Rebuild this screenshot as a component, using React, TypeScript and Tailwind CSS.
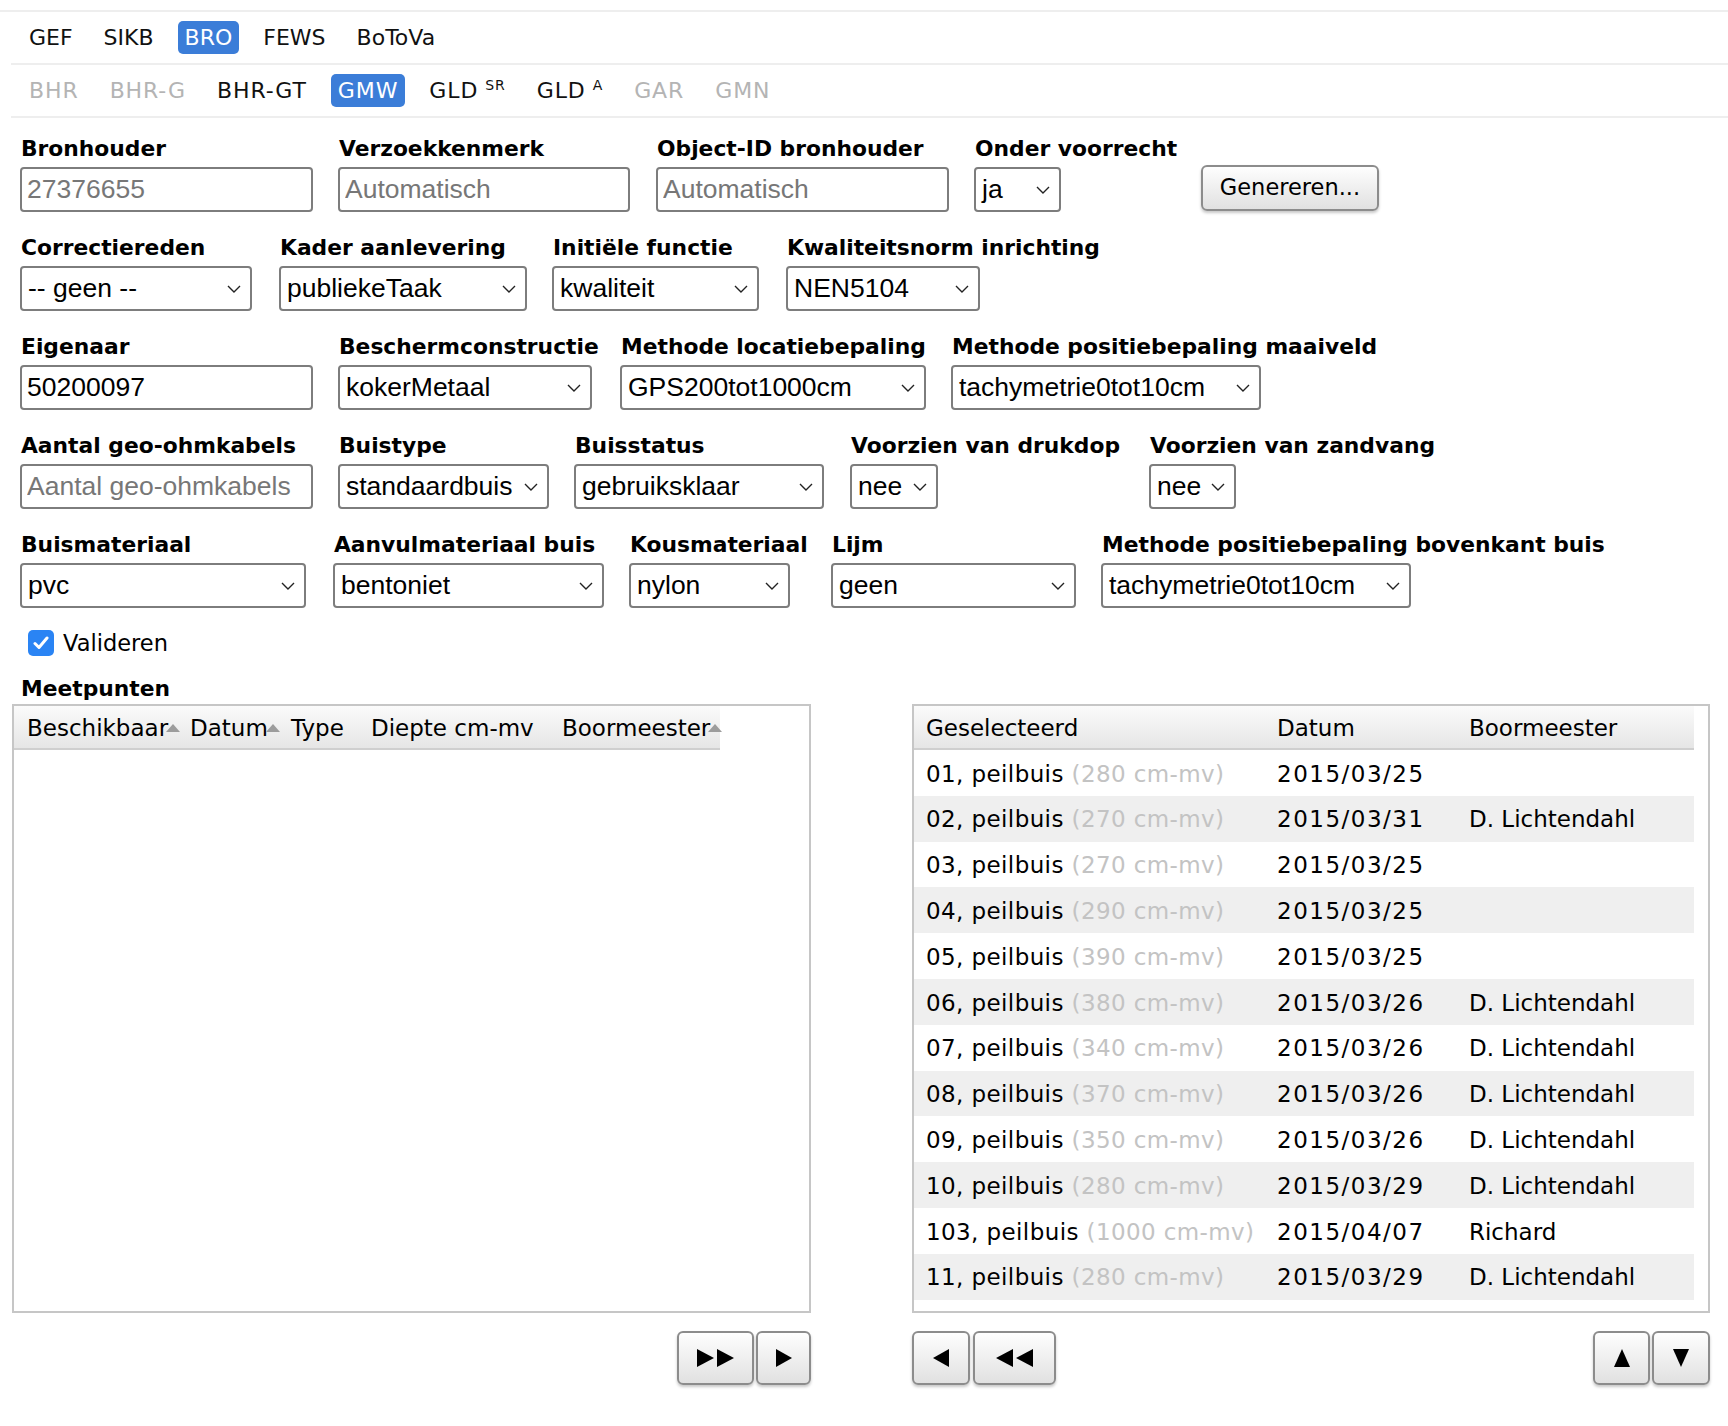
import React from "react";

const sans = "font-['DejaVu_Sans',sans-serif]";
const arial = "font-['Liberation_Sans',Arial,sans-serif]";

function Chevron() {
  return (
    <svg width="14" height="8" viewBox="0 0 14 8" className="shrink-0">
      <polyline points="1,1 7,7 13,1" fill="none" stroke="#222" strokeWidth="1.4" />
    </svg>
  );
}

function Field({ w, label, children }: { w: string; label: string; children: React.ReactNode }) {
  return (
    <div className={`${w} shrink-0 flex flex-col`}>
      <div className={`h-[30px] leading-[32px] pl-[1px] font-bold text-[21.8px] text-black whitespace-nowrap ${sans}`}>
        {label}
      </div>
      <div className="mt-[4px]">{children}</div>
    </div>
  );
}

function TextInput({ w, value, placeholder }: { w: string; value?: string; placeholder?: string }) {
  return (
    <input
      readOnly
      defaultValue={value}
      placeholder={placeholder}
      className={`${w} h-[45px] block border-2 border-[#7d7d7d] rounded-[4px] bg-white pl-[5px] outline-none ${arial} text-[26.5px] text-black placeholder:text-[#777777]`}
    />
  );
}

function Select({ w, value }: { w: string; value: string }) {
  return (
    <div
      className={`${w} h-[45px] border-2 border-[#7d7d7d] rounded-[4px] bg-white pl-[6px] pr-[9px] flex items-center justify-between ${arial} text-[26.5px] text-black whitespace-nowrap`}
    >
      <span>{value}</span>
      <Chevron />
    </div>
  );
}

function NavItem({ label, active, disabled, sup }: { label: string; active?: boolean; disabled?: boolean; sup?: string }) {
  return (
    <div
      className={`px-[7px] h-[33px] flex items-center rounded-[5px] ${
        active ? "bg-[#3b7dd8] text-white" : disabled ? "text-[#b4b4b4]" : "text-[#111111]"
      }`}
    >
      <span>{label}</span>
      {sup && <span className="text-[14px] ml-[7px] self-start mt-[1px]">{sup}</span>}
    </div>
  );
}

function Btn({ w, h, children }: { w: string; h: string; children: React.ReactNode }) {
  return (
    <div
      className={`${w} ${h} rounded-[6px] border-2 border-[#8c8c8c] bg-linear-to-b from-[#fefefe] to-[#e1e1e1] shadow-[0_2px_3px_rgba(0,0,0,0.22)] flex items-center justify-center`}
    >
      {children}
    </div>
  );
}

function SortArrow() {
  return (
    <svg width="14" height="8" viewBox="0 0 14 8" className="shrink-0 -ml-[2px]">
      <polygon points="0,8 7,0 14,8" fill="#9c9c9c" />
    </svg>
  );
}

const rows = [
  { n: "01", d: "280", date: "2015/03/25", b: "" },
  { n: "02", d: "270", date: "2015/03/31", b: "D. Lichtendahl" },
  { n: "03", d: "270", date: "2015/03/25", b: "" },
  { n: "04", d: "290", date: "2015/03/25", b: "" },
  { n: "05", d: "390", date: "2015/03/25", b: "" },
  { n: "06", d: "380", date: "2015/03/26", b: "D. Lichtendahl" },
  { n: "07", d: "340", date: "2015/03/26", b: "D. Lichtendahl" },
  { n: "08", d: "370", date: "2015/03/26", b: "D. Lichtendahl" },
  { n: "09", d: "350", date: "2015/03/26", b: "D. Lichtendahl" },
  { n: "10", d: "280", date: "2015/03/29", b: "D. Lichtendahl" },
  { n: "103", d: "1000", date: "2015/04/07", b: "Richard" },
  { n: "11", d: "280", date: "2015/03/29", b: "D. Lichtendahl" },
];

export default function App() {
  return (
    <div className={`w-[1728px] min-h-[1426px] bg-white ${sans} text-black`}>
      {/* nav */}
      <div className="pt-[10px]">
        <div className="border-t-2 border-[#eeeeee]" />
        <div className="ml-[11px] h-[51px] flex items-center gap-[17px] pl-[11px] text-[22px]">
          <NavItem label="GEF" />
          <NavItem label="SIKB" />
          <NavItem label="BRO" active />
          <NavItem label="FEWS" />
          <NavItem label="BoToVa" />
        </div>
        <div className="ml-[11px] border-t-2 border-[#eeeeee]" />
        <div className="ml-[11px] h-[51px] flex items-center gap-[17px] pl-[11px] text-[22px] tracking-[0.9px]">
          <NavItem label="BHR" disabled />
          <NavItem label="BHR-G" disabled />
          <NavItem label="BHR-GT" />
          <NavItem label="GMW" active />
          <NavItem label="GLD" sup="SR" />
          <NavItem label="GLD" sup="A" />
          <NavItem label="GAR" disabled />
          <NavItem label="GMN" disabled />
        </div>
        <div className="ml-[11px] border-t-2 border-[#eeeeee]" />
      </div>

      {/* form */}
      <div className="pl-[20px] pt-[15px] flex flex-col gap-[20px]">
        <div className="flex items-start">
          <Field w="w-[318px]" label="Bronhouder">
            <TextInput w="w-[293px]" placeholder="27376655" />
          </Field>
          <Field w="w-[318px]" label="Verzoekkenmerk">
            <TextInput w="w-[292px]" placeholder="Automatisch" />
          </Field>
          <Field w="w-[318px]" label="Object-ID bronhouder">
            <TextInput w="w-[293px]" placeholder="Automatisch" />
          </Field>
          <Field w="w-[227px]" label="Onder voorrecht">
            <Select w="w-[87px]" value="ja" />
          </Field>
          <div className="shrink-0 pt-[32px]">
            <Btn w="w-[178px]" h="h-[46px]">
              <span className="text-[22.5px] text-black">Genereren...</span>
            </Btn>
          </div>
        </div>

        <div className="flex items-start">
          <Field w="w-[259px]" label="Correctiereden">
            <Select w="w-[232px]" value="-- geen --" />
          </Field>
          <Field w="w-[273px]" label="Kader aanlevering">
            <Select w="w-[248px]" value="publiekeTaak" />
          </Field>
          <Field w="w-[234px]" label="Initiële functie">
            <Select w="w-[207px]" value="kwaliteit" />
          </Field>
          <Field w="w-[320px]" label="Kwaliteitsnorm inrichting">
            <Select w="w-[194px]" value="NEN5104" />
          </Field>
        </div>

        <div className="flex items-start">
          <Field w="w-[318px]" label="Eigenaar">
            <TextInput w="w-[293px]" value="50200097" />
          </Field>
          <Field w="w-[282px]" label="Beschermconstructie">
            <Select w="w-[254px]" value="kokerMetaal" />
          </Field>
          <Field w="w-[331px]" label="Methode locatiebepaling">
            <Select w="w-[306px]" value="GPS200tot1000cm" />
          </Field>
          <Field w="w-[420px]" label="Methode positiebepaling maaiveld">
            <Select w="w-[310px]" value="tachymetrie0tot10cm" />
          </Field>
        </div>

        <div className="flex items-start">
          <Field w="w-[318px]" label="Aantal geo-ohmkabels">
            <TextInput w="w-[293px]" placeholder="Aantal geo-ohmkabels" />
          </Field>
          <Field w="w-[236px]" label="Buistype">
            <Select w="w-[211px]" value="standaardbuis" />
          </Field>
          <Field w="w-[276px]" label="Buisstatus">
            <Select w="w-[250px]" value="gebruiksklaar" />
          </Field>
          <Field w="w-[299px]" label="Voorzien van drukdop">
            <Select w="w-[88px]" value="nee" />
          </Field>
          <Field w="w-[300px]" label="Voorzien van zandvang">
            <Select w="w-[87px]" value="nee" />
          </Field>
        </div>

        <div className="flex items-start">
          <Field w="w-[313px]" label="Buismateriaal">
            <Select w="w-[286px]" value="pvc" />
          </Field>
          <Field w="w-[296px]" label="Aanvulmateriaal buis">
            <Select w="w-[271px]" value="bentoniet" />
          </Field>
          <Field w="w-[202px]" label="Kousmateriaal">
            <Select w="w-[161px]" value="nylon" />
          </Field>
          <Field w="w-[270px]" label="Lijm">
            <Select w="w-[245px]" value="geen" />
          </Field>
          <Field w="w-[520px]" label="Methode positiebepaling bovenkant buis">
            <Select w="w-[310px]" value="tachymetrie0tot10cm" />
          </Field>
        </div>
      </div>

      {/* checkbox */}
      <div className="mt-[22px] pl-[28px] flex items-center h-[26px] gap-[9px]">
        <div className="w-[26px] h-[26px] rounded-[5px] bg-[#2a84f4] flex items-center justify-center">
          <svg width="16" height="14" viewBox="0 0 16 14">
            <polyline points="2,7.5 6,11.5 14,2" fill="none" stroke="#fff" strokeWidth="3" strokeLinecap="round" strokeLinejoin="round" />
          </svg>
        </div>
        <span className="text-[22.5px] leading-none">Valideren</span>
      </div>

      <div className="mt-[18px] pl-[21px] h-[28px] leading-[30px] font-bold text-[21.8px]">Meetpunten</div>

      {/* tables */}
      <div className="mt-[2px] pl-[12px] flex gap-[101px]">
        <div className="w-[799px] h-[609px] shrink-0 border-2 border-[#c6c6c6] bg-white">
          <div className="w-[706px] h-[44px] flex items-center bg-linear-to-b from-[#fbfbfb] to-[#e6e6e6] border-b-2 border-[#cfcfcf] text-[23px] pt-[2px]">
            <div className="w-[163px] pl-[13px] flex items-center">
              <span>Beschikbaar</span>
              <SortArrow />
            </div>
            <div className="w-[101px] pl-[13px] flex items-center">
              <span>Datum</span>
              <SortArrow />
            </div>
            <div className="w-[80px] pl-[13px]">Type</div>
            <div className="w-[191px] pl-[13px] whitespace-nowrap">Diepte cm-mv</div>
            <div className="w-[171px] pl-[13px] flex items-center">
              <span>Boormeester</span>
              <SortArrow />
            </div>
          </div>
        </div>

        <div className="w-[798px] h-[609px] shrink-0 border-2 border-[#c6c6c6] bg-white">
          <div className="w-[780px] h-[44px] flex items-center bg-linear-to-b from-[#fbfbfb] to-[#e6e6e6] border-b-2 border-[#cfcfcf] text-[23px] pt-[2px]">
            <div className="w-[351px] pl-[12px]">Geselecteerd</div>
            <div className="w-[192px] pl-[12px]">Datum</div>
            <div className="flex-1 pl-[12px]">Boormeester</div>
          </div>
          {rows.map((r, i) => (
            <div
              key={i}
              className={`w-[780px] h-[45.8px] flex items-center text-[23px] whitespace-nowrap pt-[2px] ${i % 2 === 1 ? "bg-[#efefef]" : "bg-white"}`}
            >
              <div className="w-[351px] pl-[12px] tracking-[0.4px]">
                {r.n}, peilbuis <span className="text-[#c3c3c3]">({r.d} cm-mv)</span>
              </div>
              <div className="w-[192px] pl-[12px] tracking-[1.5px]">{r.date}</div>
              <div className="flex-1 pl-[12px]">{r.b}</div>
            </div>
          ))}
        </div>
      </div>

      {/* buttons */}
      <div className="mt-[18px] pl-[12px] flex gap-[101px]">
        <div className="w-[799px] shrink-0 flex justify-end gap-[2px]">
          <Btn w="w-[77px]" h="h-[54px]">
            <svg width="38" height="18" viewBox="0 0 38 18">
              <polygon points="0,0 17,9 0,18" fill="#000" />
              <polygon points="20,0 37,9 20,18" fill="#000" />
            </svg>
          </Btn>
          <Btn w="w-[55px]" h="h-[54px]">
            <svg width="18" height="18" viewBox="0 0 18 18">
              <polygon points="1,0 17,9 1,18" fill="#000" />
            </svg>
          </Btn>
        </div>
        <div className="w-[798px] shrink-0 flex justify-between">
          <div className="flex gap-[3px]">
            <Btn w="w-[58px]" h="h-[54px]">
              <svg width="18" height="18" viewBox="0 0 18 18">
                <polygon points="17,0 1,9 17,18" fill="#000" />
              </svg>
            </Btn>
            <Btn w="w-[83px]" h="h-[54px]">
              <svg width="38" height="18" viewBox="0 0 38 18">
                <polygon points="17,0 0,9 17,18" fill="#000" />
                <polygon points="37,0 20,9 37,18" fill="#000" />
              </svg>
            </Btn>
          </div>
          <div className="flex gap-[2px]">
            <Btn w="w-[57px]" h="h-[54px]">
              <svg width="16" height="18" viewBox="0 0 16 18">
                <polygon points="8,0 16,18 0,18" fill="#000" />
              </svg>
            </Btn>
            <Btn w="w-[58px]" h="h-[54px]">
              <svg width="16" height="18" viewBox="0 0 16 18">
                <polygon points="0,0 16,0 8,18" fill="#000" />
              </svg>
            </Btn>
          </div>
        </div>
      </div>
    </div>
  );
}
